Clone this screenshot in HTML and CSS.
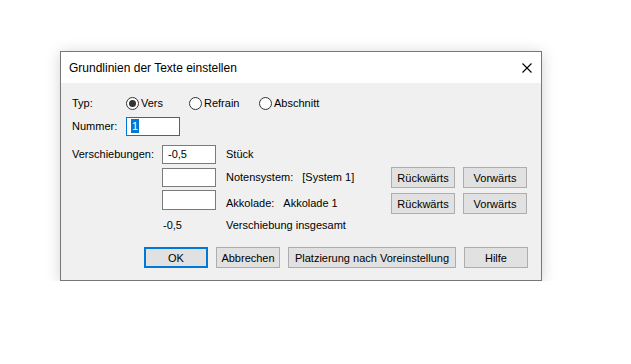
FILE: index.html
```html
<!DOCTYPE html>
<html>
<head>
  <meta charset="utf-8">
  <title>Grundlinien der Texte einstellen</title>
  <link rel="stylesheet" href="styles.css">
</head>
<body>
  <div class="dialog">
    <div class="titlebar">
      <span class="title">Grundlinien der Texte einstellen</span>
      <svg class="close" width="10" height="10" viewBox="0 0 10 10">
        <path d="M0.5 0.5 L9.5 9.5 M9.5 0.5 L0.5 9.5" stroke="#000" stroke-width="1.1" fill="none"/>
      </svg>
    </div>
    <div class="content">
      <div class="row row-typ">
        <span class="label">Typ:</span>
        <label class="radio radio--vers"><span class="dot checked"></span>Vers</label>
        <label class="radio radio--refrain"><span class="dot"></span>Refrain</label>
        <label class="radio"><span class="dot"></span>Abschnitt</label>
      </div>
      <div class="row row-num">
        <span class="label">Nummer:</span>
        <div class="field field--focus"><span class="sel">1</span></div>
      </div>
      <div class="shifts">
        <span class="label">Verschiebungen:</span>
        <div class="field">-0,5</div>
        <span class="text">Stück</span>

        <div class="field field--r2"></div>
        <span class="text text--r2"><span class="key">Notensystem:</span>[System 1]</span>
        <button class="btn btn--r2 btn--back">Rückwärts</button>
        <button class="btn btn--r2 btn--fwd">Vorwärts</button>

        <div class="field field--r3"></div>
        <span class="text text--r3"><span class="key">Akkolade:</span>Akkolade 1</span>
        <button class="btn btn--r3 btn--back">Rückwärts</button>
        <button class="btn btn--r3 btn--fwd">Vorwärts</button>

        <span class="total">-0,5</span>
        <span class="text text--r4">Verschiebung insgesamt</span>
      </div>
      <div class="actions">
        <button class="btn btn--default">OK</button>
        <button class="btn">Abbrechen</button>
        <button class="btn btn--wide">Platzierung nach Voreinstellung</button>
        <button class="btn">Hilfe</button>
      </div>
    </div>
  </div>
</body>
</html>
```

FILE: styles.css
```css
body {
  margin: 0;
  padding: 51px 0 0 60px;
  background-color: #fff;
  font-family: "Liberation Sans", Arial, sans-serif;
  font-size: 11px;
  color: #000;
}

.dialog {
  width: 480px;
  border: 1px solid #777;
  background-color: #f0f0f0;
  box-shadow: 0 2px 14px rgba(0, 0, 0, 0.18);
}

.titlebar {
  display: flex;
  align-items: center;
  justify-content: space-between;
  height: 31px;
  padding-left: 8px;
  background-color: #fff;
}
.title {
  font-size: 12px;
}
.close {
  display: block;
  margin-right: 9px;
}

.content {
  padding: 12px 13px 12px 11px;
}

.row {
  display: flex;
  align-items: center;
}
.label {
  line-height: 19px;
}
.row .label {
  width: 54px;
}
.row-typ {
  height: 16px;
}
.row-num {
  margin-top: 6px;
  height: 19px;
}

.radio {
  display: flex;
  align-items: center;
}
.radio--vers {
  width: 63px;
}
.radio--refrain {
  width: 70px;
}
.dot {
  box-sizing: border-box;
  width: 13px;
  height: 13px;
  margin-right: 2px;
  border: 1px solid #333;
  border-radius: 50%;
  background-color: #fff;
  position: relative;
}
.dot.checked:after {
  content: '';
  position: absolute;
  left: 2px;
  top: 2px;
  width: 7px;
  height: 7px;
  border-radius: 50%;
  background-color: #333;
}

.field {
  box-sizing: border-box;
  width: 54px;
  height: 19px;
  padding-left: 5px;
  border: 1px solid #7a7a7a;
  background-color: #fff;
  line-height: 17px;
}
.field--focus {
  border-color: #0078d7;
  padding-left: 4px;
}
.sel {
  background-color: #0078d7;
  color: #fff;
  padding: 1px 1px;
}

.shifts {
  display: grid;
  grid-template-columns: 90px 64px 165px 72px 64px;
  grid-template-rows: 23px 22px 24px 23px;
  align-items: start;
  margin-top: 9px;
}
.shifts .label {
  grid-column: 1;
  grid-row: 1;
}
.field--r2 {
  grid-column: 2;
  grid-row: 2;
}
.field--r3 {
  grid-column: 2;
  grid-row: 3;
  height: 20px;
}
.text {
  grid-column: 3;
  line-height: 19px;
}
.text--r2 {
  grid-row: 2;
}
.text--r3 {
  grid-row: 3;
  margin-top: 4px;
}
.text--r4 {
  grid-row: 4;
  margin-top: 2px;
}
.key {
  margin-right: 9px;
}
.total {
  grid-column: 2;
  grid-row: 4;
  line-height: 19px;
  margin-top: 2px;
  padding-left: 1px;
}

.btn {
  box-sizing: border-box;
  width: 64px;
  height: 21px;
  padding: 0;
  border: 1px solid #adadad;
  background-color: #e1e1e1;
  font-family: "Liberation Sans", Arial, sans-serif;
  font-size: 11px;
  color: #000;
}
.btn--r2 {
  grid-row: 2;
  margin-top: -1px;
}
.btn--r3 {
  grid-row: 3;
  margin-top: 3px;
}
.btn--back {
  grid-column: 4;
}
.btn--fwd {
  grid-column: 5;
}
.btn--default {
  border: 2px solid #0078d7;
}
.btn--wide {
  width: 168px;
}

.actions {
  display: flex;
  justify-content: flex-end;
  gap: 8px;
  margin-top: 10px;
}
```
